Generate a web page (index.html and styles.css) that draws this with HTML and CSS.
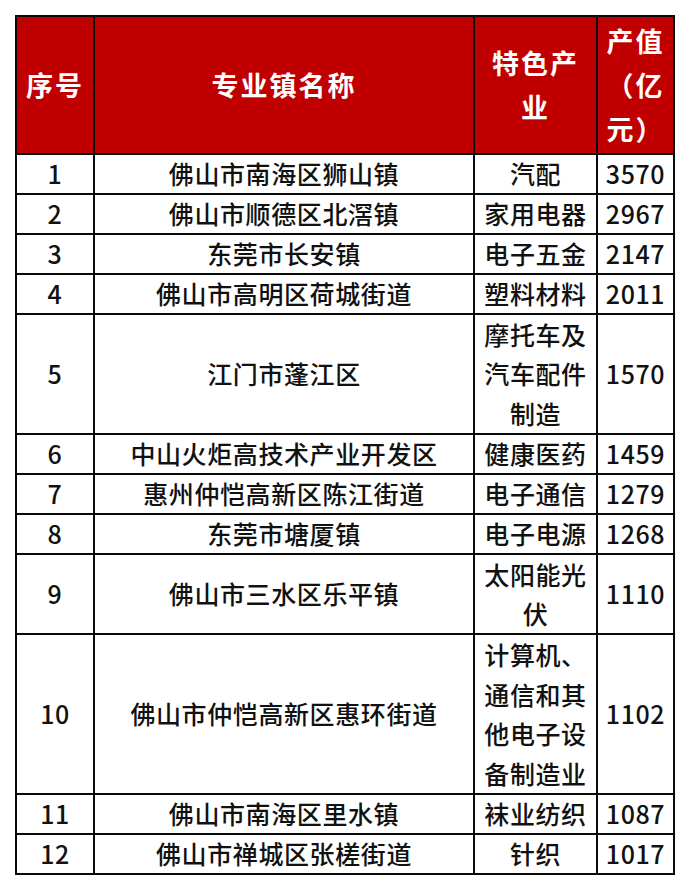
FILE: index.html
```html
<!DOCTYPE html>
<html lang="zh-CN">
<head>
<meta charset="utf-8">
<title>专业镇</title>
<link rel="stylesheet" href="styles.css">
</head>
<body>
<div class="table">
  <div class="cell head">序号</div>
  <div class="cell head">专业镇名称</div>
  <div class="cell head head-ind">特色产业</div>
  <div class="cell head">产值（亿元）</div>

  <div class="cell">1</div><div class="cell">佛山市南海区狮山镇</div><div class="cell ind">汽配</div><div class="cell num">3570</div>
  <div class="cell">2</div><div class="cell">佛山市顺德区北滘镇</div><div class="cell ind">家用电器</div><div class="cell num">2967</div>
  <div class="cell">3</div><div class="cell">东莞市长安镇</div><div class="cell ind">电子五金</div><div class="cell num">2147</div>
  <div class="cell">4</div><div class="cell">佛山市高明区荷城街道</div><div class="cell ind">塑料材料</div><div class="cell num">2011</div>
  <div class="cell">5</div><div class="cell">江门市蓬江区</div><div class="cell ind">摩托车及汽车配件制造</div><div class="cell num">1570</div>
  <div class="cell">6</div><div class="cell">中山火炬高技术产业开发区</div><div class="cell ind">健康医药</div><div class="cell num">1459</div>
  <div class="cell">7</div><div class="cell">惠州仲恺高新区陈江街道</div><div class="cell ind">电子通信</div><div class="cell num">1279</div>
  <div class="cell">8</div><div class="cell">东莞市塘厦镇</div><div class="cell ind">电子电源</div><div class="cell num">1268</div>
  <div class="cell">9</div><div class="cell">佛山市三水区乐平镇</div><div class="cell ind">太阳能光伏</div><div class="cell num">1110</div>
  <div class="cell">10</div><div class="cell">佛山市仲恺高新区惠环街道</div><div class="cell ind">计算机、通信和其他电子设备制造业</div><div class="cell num">1102</div>
  <div class="cell">11</div><div class="cell">佛山市南海区里水镇</div><div class="cell ind">袜业纺织</div><div class="cell num">1087</div>
  <div class="cell">12</div><div class="cell">佛山市禅城区张槎街道</div><div class="cell ind">针织</div><div class="cell num">1017</div>
</div>
</body>
</html>
```

FILE: styles.css
```css
html, body {
  margin: 0;
  padding: 0;
  background: #ffffff;
}

body {
  font-family: "Noto Sans CJK SC", "Noto Sans", sans-serif;
  color: #111111;
}

.table {
  margin: 15px 0 0 15px;
  width: 660px;
  box-sizing: border-box;
  display: grid;
  grid-template-columns: 76px 378px 121px 75px;
  grid-template-rows: 136px 38px 38px 38px 38px 118px 38px 38px 38px 78px 158px 38px 38px;
  gap: 2px;
  padding: 2px;
  background: #0a0a0a;
}

.cell {
  background: #ffffff;
  display: flex;
  align-items: center;
  justify-content: center;
  text-align: center;
  font-size: 25px;
  font-weight: 500;
  letter-spacing: 0.6px;
  line-height: 39.5px;
  padding: 0 4px;
}

.head {
  background: #c00000;
  color: #ffffff;
  font-weight: 700;
  font-size: 27px;
  letter-spacing: 2px;
  line-height: 44px;
  padding: 0 6px;
}

.head-ind {
  padding: 0 8px;
}

.num {
  padding: 0 2px;
}
```
